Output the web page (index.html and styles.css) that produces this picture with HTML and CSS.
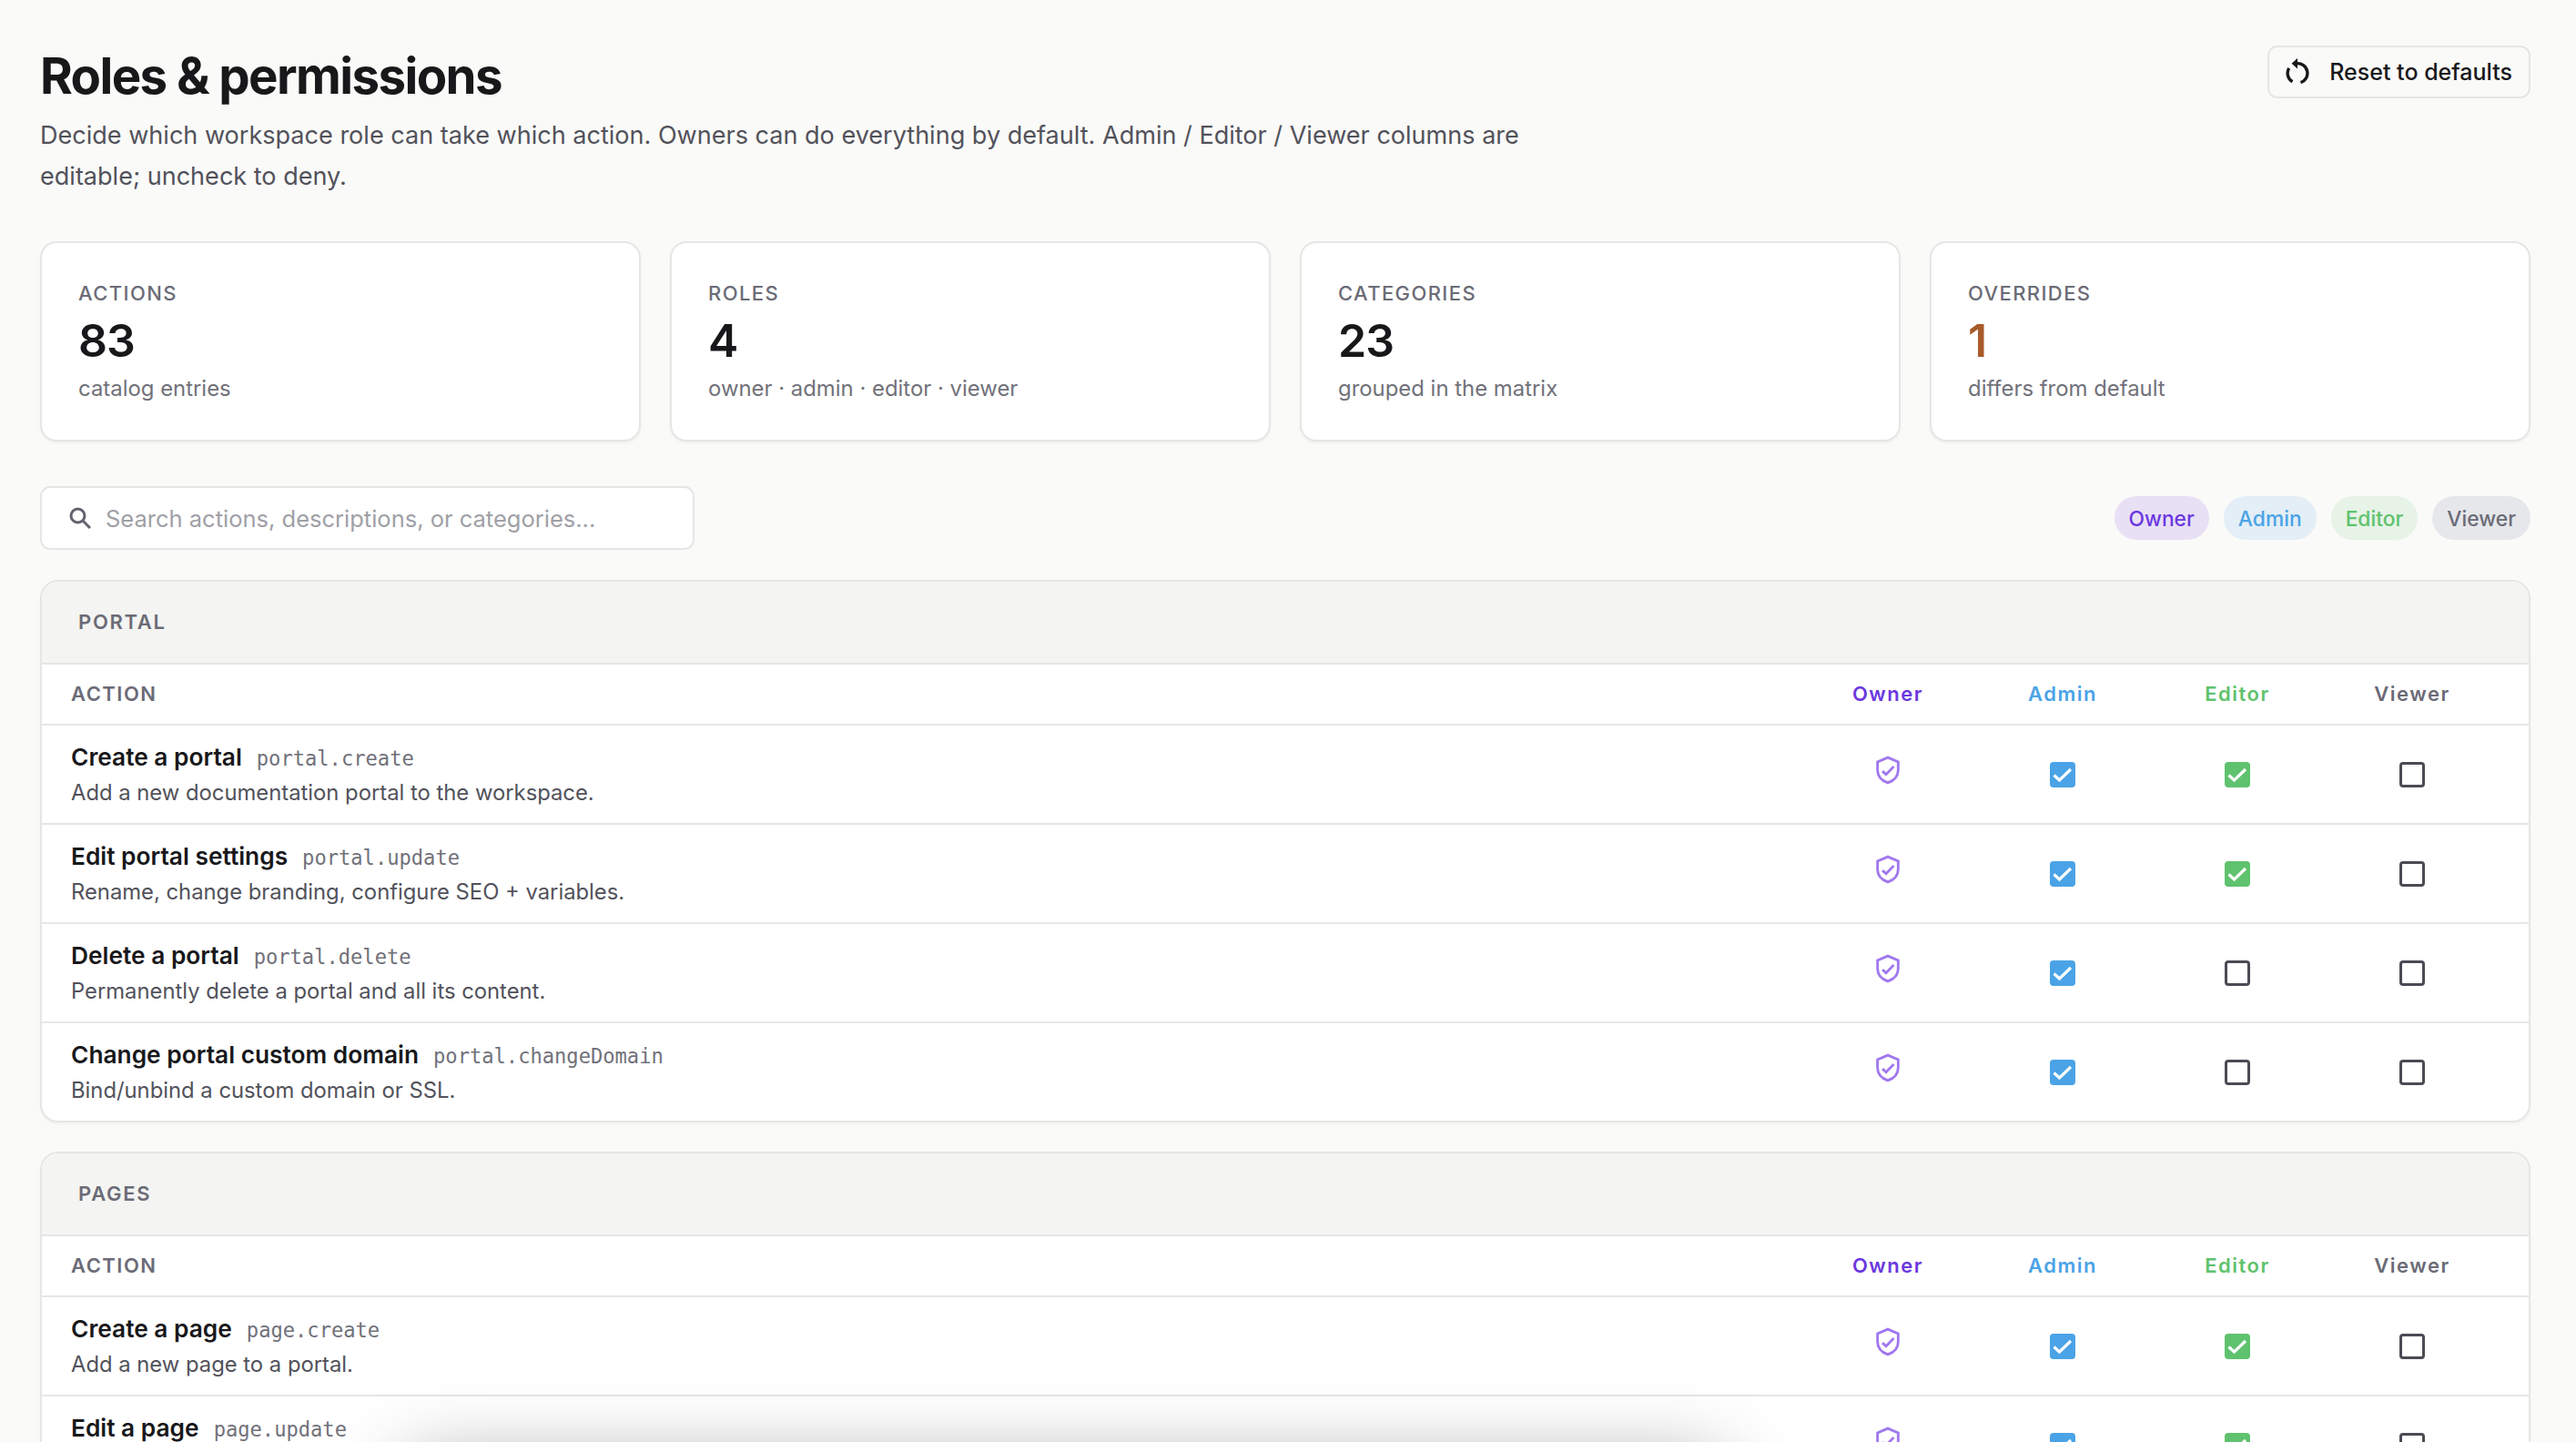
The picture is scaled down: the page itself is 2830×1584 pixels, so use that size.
FILE: index.html

```html
<!DOCTYPE html>
<html lang="en">
<head>
    <meta charset="UTF-8">
    <meta name="viewport" content="width=device-width, initial-scale=1.0">
    <title>Roles &amp; permissions</title>
    <link rel="stylesheet" href="styles.css">
</head>
<body>

<!-- Shared icons -->
<svg class="icon-defs" width="0" height="0">
    <symbol id="i-shield" viewBox="0 0 24 24">
        <path d="M12 2.2 L20 5.6 V12 C20 16.8 16.6 20.2 12 21.8 C7.4 20.2 4 16.8 4 12 V5.6 Z" fill="none" stroke="currentColor" stroke-width="2"/>
        <path d="M7.8 12.8 L10.6 15.3 L16.6 9.2" fill="none" stroke="currentColor" stroke-width="2"/>
    </symbol>
    <symbol id="i-check" viewBox="0 0 28 28">
        <path d="M4.5 14.5 L10.5 20 L23 8" fill="none" stroke="#fff" stroke-width="3.2"/>
    </symbol>
</svg>

<div class="page">
    <!-- Header -->
    <header class="page-head">
        <div>
            <h1>Roles &amp; permissions</h1>
            <p class="intro">Decide which workspace role can take which action. Owners can do everything by default. Admin / Editor / Viewer columns are editable; uncheck to deny.</p>
        </div>
        <button type="button" class="reset-btn">
            <svg width="26" height="30" viewBox="0 0 26 30" fill="none" stroke="currentColor" stroke-width="3.4">
                <path d="M12 5.7 A10.8 10.8 0 0 1 16.5 26.7"/>
                <path d="M3.7 10.9 A10.8 10.8 0 0 0 7.5 25.8"/>
                <path d="M13 0 V11.4 L6.6 5.7 Z" fill="currentColor" stroke="none"/>
            </svg>
            Reset to defaults
        </button>
    </header>

    <!-- Stats -->
    <section class="stats">
        <div class="stat">
            <div class="stat-label">Actions</div>
            <div class="stat-value">83</div>
            <div class="stat-sub">catalog entries</div>
        </div>
        <div class="stat">
            <div class="stat-label">Roles</div>
            <div class="stat-value">4</div>
            <div class="stat-sub">owner · admin · editor · viewer</div>
        </div>
        <div class="stat">
            <div class="stat-label">Categories</div>
            <div class="stat-value">23</div>
            <div class="stat-sub">grouped in the matrix</div>
        </div>
        <div class="stat">
            <div class="stat-label">Overrides</div>
            <div class="stat-value changed">1</div>
            <div class="stat-sub">differs from default</div>
        </div>
    </section>

    <!-- Search + legend -->
    <div class="toolbar">
        <label class="search">
            <svg width="24" height="24" viewBox="0 0 24 24" fill="none" stroke="currentColor" stroke-width="3">
                <circle cx="9.5" cy="9.5" r="7.5"/>
                <path d="M15 15 L23 23"/>
            </svg>
            <input type="text" placeholder="Search actions, descriptions, or categories...">
        </label>
        <div class="legend">
            <span class="pill pill-owner">Owner</span>
            <span class="pill pill-admin">Admin</span>
            <span class="pill pill-editor">Editor</span>
            <span class="pill pill-viewer">Viewer</span>
        </div>
    </div>

    <!-- Portal -->
    <section class="group">
        <h2 class="group-title">Portal</h2>
        <div class="row row-head">
            <div class="col-action">Action</div>
            <div class="col-role owner">Owner</div>
            <div class="col-role admin">Admin</div>
            <div class="col-role editor">Editor</div>
            <div class="col-role viewer">Viewer</div>
        </div>
        <div class="row">
            <div class="action">
                <div><span class="action-name">Create a portal</span><code>portal.create</code></div>
                <div class="action-desc">Add a new documentation portal to the workspace.</div>
            </div>
            <div class="cell"><svg class="shield"><use href="#i-shield"/></svg></div>
            <div class="cell"><span class="box box-admin"><svg><use href="#i-check"/></svg></span></div>
            <div class="cell"><span class="box box-editor"><svg><use href="#i-check"/></svg></span></div>
            <div class="cell"><span class="box"></span></div>
        </div>
        <div class="row">
            <div class="action">
                <div><span class="action-name">Edit portal settings</span><code>portal.update</code></div>
                <div class="action-desc">Rename, change branding, configure SEO + variables.</div>
            </div>
            <div class="cell"><svg class="shield"><use href="#i-shield"/></svg></div>
            <div class="cell"><span class="box box-admin"><svg><use href="#i-check"/></svg></span></div>
            <div class="cell"><span class="box box-editor"><svg><use href="#i-check"/></svg></span></div>
            <div class="cell"><span class="box"></span></div>
        </div>
        <div class="row">
            <div class="action">
                <div><span class="action-name">Delete a portal</span><code>portal.delete</code></div>
                <div class="action-desc">Permanently delete a portal and all its content.</div>
            </div>
            <div class="cell"><svg class="shield"><use href="#i-shield"/></svg></div>
            <div class="cell"><span class="box box-admin"><svg><use href="#i-check"/></svg></span></div>
            <div class="cell"><span class="box"></span></div>
            <div class="cell"><span class="box"></span></div>
        </div>
        <div class="row">
            <div class="action">
                <div><span class="action-name">Change portal custom domain</span><code>portal.changeDomain</code></div>
                <div class="action-desc">Bind/unbind a custom domain or SSL.</div>
            </div>
            <div class="cell"><svg class="shield"><use href="#i-shield"/></svg></div>
            <div class="cell"><span class="box box-admin"><svg><use href="#i-check"/></svg></span></div>
            <div class="cell"><span class="box"></span></div>
            <div class="cell"><span class="box"></span></div>
        </div>
    </section>

    <!-- Pages -->
    <section class="group">
        <h2 class="group-title">Pages</h2>
        <div class="row row-head">
            <div class="col-action">Action</div>
            <div class="col-role owner">Owner</div>
            <div class="col-role admin">Admin</div>
            <div class="col-role editor">Editor</div>
            <div class="col-role viewer">Viewer</div>
        </div>
        <div class="row">
            <div class="action">
                <div><span class="action-name">Create a page</span><code>page.create</code></div>
                <div class="action-desc">Add a new page to a portal.</div>
            </div>
            <div class="cell"><svg class="shield"><use href="#i-shield"/></svg></div>
            <div class="cell"><span class="box box-admin"><svg><use href="#i-check"/></svg></span></div>
            <div class="cell"><span class="box box-editor"><svg><use href="#i-check"/></svg></span></div>
            <div class="cell"><span class="box"></span></div>
        </div>
        <div class="row">
            <div class="action">
                <div><span class="action-name">Edit a page</span><code>page.update</code></div>
            </div>
            <div class="cell"><svg class="shield"><use href="#i-shield"/></svg></div>
            <div class="cell"><span class="box box-admin"><svg><use href="#i-check"/></svg></span></div>
            <div class="cell"><span class="box box-editor"><svg><use href="#i-check"/></svg></span></div>
            <div class="cell"><span class="box"></span></div>
        </div>
    </section>
</div>

<!-- Save bar sitting just under the fold, only its shadow shows -->
<div class="float-bar"></div>

</body>
</html>
```

FILE: styles.css

```css
html, body {
    height: 1584px;
    overflow: hidden;
}

body {
    margin: 0;
    background-color: #fafaf8;
    color: #18181b;
    font-family: 'Inter', sans-serif;
}

.icon-defs {
    display: block;
    height: 0;
}

.page {
    padding: 50px 50px 0 44px;
}

/* Header */
.page-head {
    display: flex;
    justify-content: space-between;
    align-items: flex-start;
    height: 215px;
}

h1 {
    margin: 0;
    font-size: 54.6px;
    line-height: 66px;
    font-weight: 700;
    letter-spacing: -1.6px;
}

.intro {
    max-width: 1680px;
    margin: 10px 0 0;
    font-size: 27.05px;
    line-height: 45px;
    color: #52525b;
}

.reset-btn {
    display: flex;
    align-items: center;
    gap: 22px;
    height: 58px;
    padding: 0 18px;
    background-color: #fafaf8;
    border: 2px solid #e6e6e4;
    border-radius: 11px;
    color: #18181b;
    font-family: inherit;
    font-size: 25px;
    font-weight: 500;
}

/* Stats */
.stats {
    display: grid;
    grid-template-columns: repeat(4, 1fr);
    gap: 32px;
}

.stat {
    height: 220px;
    box-sizing: border-box;
    padding: 40px 40px 0;
    background-color: #fff;
    border: 2px solid #e6e6e4;
    border-radius: 18px;
    box-shadow: 0 2px 3px rgba(0, 0, 0, 0.04);
}

.stat-label {
    font-size: 22px;
    line-height: 30px;
    font-weight: 500;
    letter-spacing: 1.4px;
    text-transform: uppercase;
    color: #6b6b76;
}

.stat-value {
    margin-top: 6px;
    font-size: 50px;
    line-height: 62px;
    font-weight: 600;
    letter-spacing: -1px;
}

.stat-value.changed {
    color: #a85a2a;
}

.stat-sub {
    margin-top: 6px;
    font-size: 23.9px;
    line-height: 32px;
    color: #71717a;
}

/* Search + legend */
.toolbar {
    display: flex;
    justify-content: space-between;
    align-items: center;
    margin: 49px 0 33px;
}

.search {
    display: flex;
    align-items: center;
    gap: 16px;
    width: 719px;
    height: 70px;
    box-sizing: border-box;
    padding: 0 30px;
    background-color: #fff;
    border: 2px solid #e6e6e4;
    border-radius: 11px;
    color: #62626e;
}

.search input {
    flex: 1;
    padding: 0;
    border: none;
    outline: none;
    background: none;
    font-family: inherit;
    font-size: 25.5px;
}

.search input::placeholder {
    color: #a0a0a6;
}

.legend {
    display: flex;
    gap: 16px;
}

.pill {
    height: 48px;
    padding: 0 16px;
    border-radius: 24px;
    font-size: 22.8px;
    line-height: 49px;
    font-weight: 500;
}

.pill-owner {
    background-color: #e8e0f5;
    color: #6b38e0;
}

.pill-admin {
    background-color: #e3eef7;
    color: #4aa3e6;
}

.pill-editor {
    background-color: #e6f3e6;
    color: #5fc26e;
}

.pill-viewer {
    background-color: #e6e7ea;
    color: #6b6b78;
}

/* Matrix */
.group {
    margin-bottom: 32px;
    background-color: #fff;
    border: 2px solid #e6e6e4;
    border-radius: 20px;
    overflow: hidden;
    box-shadow: 0 2px 3px rgba(0, 0, 0, 0.04);
}

.group-title {
    margin: 0;
    height: 89px;
    padding-left: 40px;
    background-color: #f4f4f2;
    font-size: 22px;
    line-height: 88px;
    font-weight: 600;
    letter-spacing: 1.7px;
    text-transform: uppercase;
    color: #6b6b76;
}

.row {
    display: grid;
    grid-template-columns: 1fr repeat(4, 192px);
    align-items: center;
    min-height: 107px;
    padding: 0 32px;
    border-top: 2px solid #e6e6e4;
}

.row-head {
    box-sizing: border-box;
    min-height: 67px;
    padding-bottom: 2px;
    font-size: 22px;
    font-weight: 600;
    letter-spacing: 1.5px;
}

.col-action {
    text-transform: uppercase;
    color: #6b6b76;
}

.col-role {
    text-align: center;
}

.owner {
    color: #6b38e0;
}

.admin {
    color: #4aa3e6;
}

.editor {
    color: #5fc26e;
}

.viewer {
    color: #6b6b76;
}

.action {
    align-self: start;
    padding-top: 17px;
}

.action-name {
    font-size: 26.3px;
    line-height: 36px;
    font-weight: 600;
}

code {
    margin-left: 16px;
    font-family: 'DejaVu Sans Mono', monospace;
    font-size: 22.1px;
    color: #71717a;
}

.action-desc {
    margin-top: 3px;
    font-size: 23.8px;
    line-height: 36px;
    color: #52525b;
}

.cell {
    display: flex;
    justify-content: center;
}

.shield {
    width: 34px;
    height: 34px;
    margin-top: -10px;
    color: #a078ee;
}

.box {
    display: block;
    width: 28px;
    height: 28px;
    box-sizing: border-box;
    border: 3px solid #4b4b55;
    border-radius: 4px;
}

.box svg {
    display: block;
    width: 28px;
    height: 28px;
}

.box-admin {
    background-color: #4aa3e6;
    border: none;
}

.box-editor {
    background-color: #5fc26e;
    border: none;
}

/* Only the shadow reaches the viewport */
.float-bar {
    position: fixed;
    left: 450px;
    top: 1615px;
    width: 1440px;
    height: 80px;
    background-color: #fff;
    box-shadow: 0 0 90px rgba(0, 0, 0, 0.45);
}
```
